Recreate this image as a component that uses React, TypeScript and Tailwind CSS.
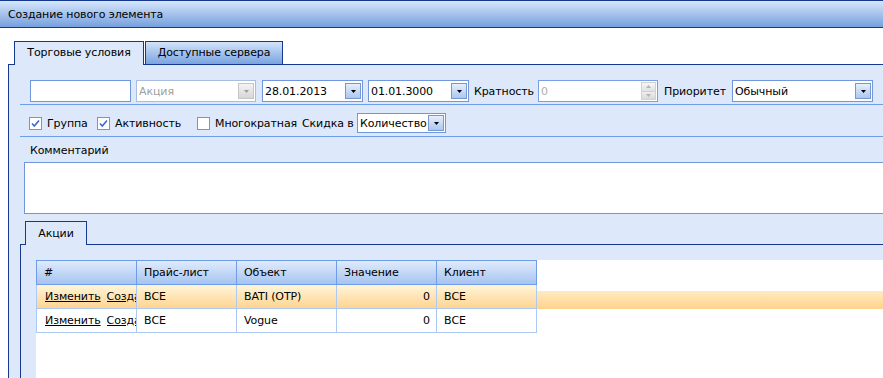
import React from "react";

function Arrow({ disabled }: { disabled?: boolean }) {
  return (
    <svg width="5" height="3" viewBox="0 0 5 3">
      <path d="M0 0h5L2.5 3z" fill={disabled ? "#9a9a9a" : "#000"} />
    </svg>
  );
}

function DropBtn({ disabled }: { disabled?: boolean }) {
  return disabled ? (
    <div className="mr-[1px] flex h-[16px] w-[16px] shrink-0 items-center justify-center border border-[#c6c6c6] bg-linear-to-b from-[#f4f4f4] to-[#d6d6d6]">
      <Arrow disabled />
    </div>
  ) : (
    <div className="mr-[1px] flex h-[16px] w-[16px] shrink-0 items-center justify-center border border-[#7897d3] bg-linear-to-b from-[#e6effc] to-[#abc7f0]">
      <Arrow />
    </div>
  );
}

function Combo({
  text,
  w,
  disabled,
  h = "h-[22px]",
}: {
  text: string;
  w: string;
  disabled?: boolean;
  h?: string;
}) {
  return (
    <div
      className={`${w} ${h} flex shrink-0 items-center border bg-white ${
        disabled ? "border-[#a9bde2] text-[#a0a0a0]" : "border-[#7097dc] text-black"
      }`}
    >
      <div className="flex-1 overflow-hidden whitespace-nowrap pl-[2px]">{text}</div>
      <DropBtn disabled={disabled} />
    </div>
  );
}

function Check({ checked }: { checked?: boolean }) {
  return (
    <div className="flex h-[13px] w-[13px] shrink-0 items-center justify-center border border-[#7595d2] bg-white">
      {checked && (
        <svg width="11" height="11" viewBox="0 0 11 11">
          <path d="M2 5.5L4.3 8L9 2.5" stroke="#3a6ad0" strokeWidth="1.6" fill="none" />
        </svg>
      )}
    </div>
  );
}

const headCell =
  "flex h-full items-center pl-[7px] border-y border-r border-[#6f9ce6] bg-linear-to-b from-[#e0ebfc] to-[#a6c4f0]";

export default function App() {
  return (
    <div className="h-[378px] w-[883px] overflow-hidden bg-white font-['DejaVu_Sans',sans-serif] text-[11px] leading-[13px] tracking-[-0.1px] text-black">
      {/* title */}
      <div className="flex h-[28px] items-center border-y border-[#15398f] bg-linear-to-b from-[#d6e6fb] to-[#76a0dd] pl-[8px]">
        Создание нового элемента
      </div>

      <div className="ml-[8px]">
        {/* tabs */}
        <div className="flex items-end gap-[1px] pl-[6px] pt-[13px]">
          <div className="relative z-10 -mb-px flex h-[24px] w-[130px] items-center justify-center border border-b-0 border-[#15398f] bg-[#dde9fb] pb-[2px]">
            Торговые условия
          </div>
          <div className="flex h-[23px] w-[138px] items-center justify-center border border-b-0 border-[#15398f] bg-linear-to-b from-[#d2e3fa] to-[#7aa3df] pb-[1px]">
            Доступные сервера
          </div>
        </div>

        {/* panel */}
        <div className="h-[320px] border-l border-t border-[#15398f] bg-[#dde9fb]">
          <div className="ml-[11px]">
            {/* row 1 */}
            <div className="flex items-center border-b border-[#6d9de8] pb-[2px] pt-[15px]">
              <div className="ml-[10px] h-[22px] w-[101px] shrink-0 border border-[#7097dc] bg-white" />
              <div className="ml-[5px]">
                <Combo text="Акция" w="w-[120px]" disabled />
              </div>
              <div className="ml-[6px]">
                <Combo text="28.01.2013" w="w-[101px]" />
              </div>
              <div className="ml-[5px]">
                <Combo text="01.01.3000" w="w-[101px]" />
              </div>
              <div className="ml-[5px] w-[64px] shrink-0 whitespace-nowrap">Кратность</div>
              <div className="flex h-[22px] w-[120px] shrink-0 items-center border border-[#7a9fe3] bg-white">
                <div className="flex-1 pl-[2px] text-[#b0b0b0]">0</div>
                <div className="mr-[1px] flex h-[18px] w-[15px] flex-col border border-[#d2d2d2]">
                  <div className="flex flex-1 items-center justify-center border-b border-[#d2d2d2] bg-linear-to-b from-[#f6f6f6] to-[#e2e2e2]">
                    <svg width="5" height="3" viewBox="0 0 5 3">
                      <path d="M0 3h5L2.5 0z" fill="#b4b4b4" />
                    </svg>
                  </div>
                  <div className="flex flex-1 items-center justify-center bg-linear-to-b from-[#eeeeee] to-[#dadada]">
                    <svg width="5" height="3" viewBox="0 0 5 3">
                      <path d="M0 0h5L2.5 3z" fill="#b4b4b4" />
                    </svg>
                  </div>
                </div>
              </div>
              <div className="ml-[6px] w-[68px] shrink-0 whitespace-nowrap">Приоритет</div>
              <Combo text="Обычный" w="w-[141px]" />
            </div>

            {/* row 2 */}
            <div className="flex items-center border-b border-[#6d9de8] pb-[3px] pt-[8px]">
              <div className="ml-[9px] flex w-[68px] shrink-0 items-center">
                <Check checked />
                <span className="ml-[5px]">Группа</span>
              </div>
              <div className="flex w-[100px] shrink-0 items-center">
                <Check checked />
                <span className="ml-[5px]">Активность</span>
              </div>
              <div className="flex w-[105px] shrink-0 items-center">
                <Check />
                <span className="ml-[5px] whitespace-nowrap">Многократная</span>
              </div>
              <div className="w-[55px] shrink-0 whitespace-nowrap">Скидка в</div>
              <Combo text="Количество" w="w-[89px]" h="h-[20px]" />
            </div>

            {/* comment */}
            <div className="flex h-[25px] items-center pl-[10px] pt-[1px]">Комментарий</div>
            <div className="ml-[4px] h-[52px] w-[900px] border border-[#7097dc] bg-white" />

            {/* inner tab */}
            <div className="flex items-end pl-[5px] pt-[7px]">
              <div className="relative z-10 -mb-px flex h-[24px] w-[62px] items-center justify-center border border-b-0 border-[#15398f] bg-[#dde9fb] pb-[1px]">
                Акции
              </div>
            </div>
            <div className="h-[200px] border-l border-t border-[#15398f] bg-[#dde9fb] pl-[15px] pt-[15px]">
              <div className="h-[200px] w-[900px] bg-white">
                {/* header */}
                <div className="flex h-[25px]">
                  <div className={`${headCell} w-[101px] border-l`}>#</div>
                  <div className={`${headCell} w-[100px]`}>Прайс-лист</div>
                  <div className={`${headCell} w-[100px]`}>Объект</div>
                  <div className={`${headCell} w-[100px]`}>Значение</div>
                  <div className={`${headCell} w-[100px]`}>Клиент</div>
                </div>
                {/* row 1 */}
                <div className="flex h-[24px]">
                  <Row orange />
                  <div className="h-[18px] flex-1 self-end bg-linear-to-b from-[#ffebc0] to-[#ffd28c]" />
                </div>
                <div className="flex h-[24px]">
                  <Row second />
                </div>
              </div>
            </div>
          </div>
        </div>
      </div>
    </div>
  );
}

function Row({ orange, second }: { orange?: boolean; second?: boolean }) {
  const bg = orange ? "bg-linear-to-b from-[#fff5da] to-[#ffd48f]" : "bg-white";
  const cell = `flex h-full items-center border-r border-b border-[#abc9f3] ${bg}`;
  return (
    <>
      <div className={`${cell} w-[101px] overflow-hidden whitespace-nowrap border-l pl-[8px]`}>
        <span className="shrink-0 underline">Изменить</span>
        <span className="ml-[6px] inline-block w-[30px] shrink-0 overflow-hidden underline">Создать</span>
      </div>
      <div className={`${cell} w-[100px] pl-[7px]`}>ВСЕ</div>
      <div className={`${cell} w-[100px] pl-[7px]`}>{second ? "Vogue" : "BATI (OTP)"}</div>
      <div className={`${cell} w-[100px] justify-end pr-[6px]`}>0</div>
      <div className={`${cell} w-[100px] pl-[7px]`}>ВСЕ</div>
    </>
  );
}
